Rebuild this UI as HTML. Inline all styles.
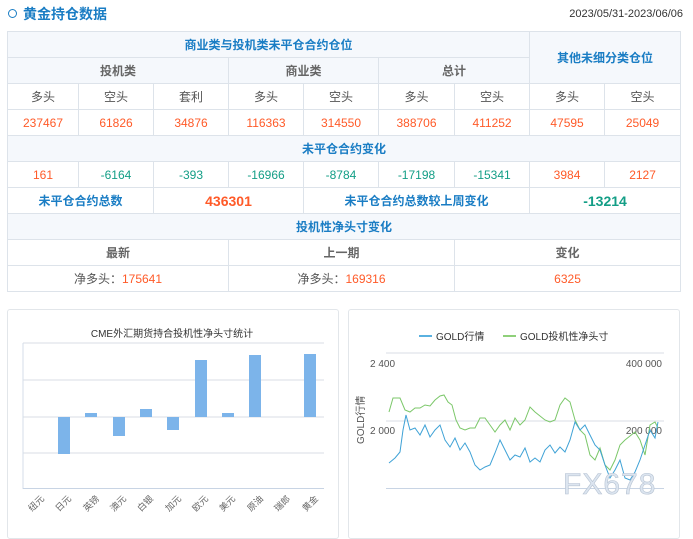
<!DOCTYPE html>
<html><head><meta charset="utf-8"><style>
*{margin:0;padding:0;box-sizing:border-box}
body{width:693px;height:520px;overflow:hidden;background:#fff;font-family:"Liberation Sans","Noto Sans CJK SC",sans-serif;position:relative}
.title{position:absolute;left:8px;top:6px;font-size:14px;font-weight:bold;color:#1a7dc4;line-height:16px}
.title i{display:inline-block;width:9px;height:9px;border:1.5px solid #1a7dc4;border-radius:50%;margin-right:6px;vertical-align:1px}
.date{position:absolute;right:10px;top:8px;font-size:11px;color:#333}
table{position:absolute;left:7px;top:31px;width:673px;border-collapse:collapse;table-layout:fixed}
td{height:26px;border:1px solid #dde3ea;text-align:center;font-size:12px;color:#555;padding:0}
.h{background:#f5f8fc}
.b{color:#1a7dc4;font-weight:bold}
.g{color:#666;font-weight:bold}
.o{color:#ff5a28}
.gr{color:#139e86}
.bo{font-weight:bold;font-size:14px}
.panel{position:absolute;top:309px;height:230px;border:1px solid #e2e6ea;border-radius:3px;background:#fff}
svg{position:absolute;left:0;top:0}
</style></head><body>
<div class="title"><i></i>黄金持仓数据</div>
<div class="date">2023/05/31-2023/06/06</div>
<table>
<colgroup><col style="width:71px"><col style="width:75px"><col style="width:75px"><col style="width:75px"><col style="width:75px"><col style="width:76px"><col style="width:75px"><col style="width:75px"><col style="width:76px"></colgroup>
<tr><td colspan="7" class="h b">商业类与投机类未平仓合约仓位</td><td colspan="2" rowspan="2" class="h b">其他未细分类仓位</td></tr>
<tr><td colspan="3" class="h g">投机类</td><td colspan="2" class="h g">商业类</td><td colspan="2" class="h g">总计</td></tr>
<tr><td>多头</td><td>空头</td><td>套利</td><td>多头</td><td>空头</td><td>多头</td><td>空头</td><td>多头</td><td>空头</td></tr>
<tr class="o"><td class="o">237467</td><td class="o">61826</td><td class="o">34876</td><td class="o">116363</td><td class="o">314550</td><td class="o">388706</td><td class="o">411252</td><td class="o">47595</td><td class="o">25049</td></tr>
<tr><td colspan="9" class="h b">未平仓合约变化</td></tr>
<tr><td class="o">161</td><td class="gr">-6164</td><td class="gr">-393</td><td class="gr">-16966</td><td class="gr">-8784</td><td class="gr">-17198</td><td class="gr">-15341</td><td class="o">3984</td><td class="o">2127</td></tr>
<tr><td colspan="2" class="b">未平仓合约总数</td><td colspan="2" class="o bo">436301</td><td colspan="3" class="b">未平仓合约总数较上周变化</td><td colspan="2" class="gr bo">-13214</td></tr>
<tr><td colspan="9" class="h b">投机性净头寸变化</td></tr>
<tr><td colspan="3" class="g">最新</td><td colspan="3" class="g">上一期</td><td colspan="3" class="g">变化</td></tr>
<tr><td colspan="3">净多头：<span class="o">175641</span></td><td colspan="3">净多头：<span class="o">169316</span></td><td colspan="3" class="o">6325</td></tr>
</table>
<div class="panel" style="left:7px;width:332px"></div>
<div class="panel" style="left:348px;width:332px"></div>
<svg width="693" height="520" font-family="Liberation Sans,Noto Sans CJK SC,sans-serif">
<text x="172" y="337" font-size="10" text-anchor="middle" fill="#333">CME外汇期货持合投机性净头寸统计</text>
<g stroke="#e6e9ee" stroke-width="1.5"><line x1="23" y1="343" x2="324" y2="343"/><line x1="23" y1="380" x2="324" y2="380"/><line x1="23" y1="417" x2="324" y2="417"/><line x1="23" y1="453" x2="324" y2="453"/></g>
<line x1="23" y1="343" x2="23" y2="489" stroke="#d5dde8"/><line x1="23" y1="488.5" x2="324" y2="488.5" stroke="#c8d4e4"/>
<g fill="#7cb4ea">
<rect x="58" y="417" width="12" height="37"/><rect x="85" y="413" width="12" height="4"/><rect x="113" y="417" width="12" height="19"/><rect x="140" y="409" width="12" height="8"/><rect x="167" y="417" width="12" height="13"/><rect x="195" y="360" width="12" height="57"/><rect x="222" y="413" width="12" height="4"/><rect x="249" y="355" width="12" height="62"/><rect x="304" y="354" width="12" height="63"/></g>
<g font-size="9" fill="#666">
<text transform="translate(32,512) rotate(-45)">纽元</text><text transform="translate(59,512) rotate(-45)">日元</text><text transform="translate(87,512) rotate(-45)">英镑</text><text transform="translate(114,512) rotate(-45)">澳元</text><text transform="translate(141,512) rotate(-45)">白银</text><text transform="translate(169,512) rotate(-45)">加元</text><text transform="translate(196,512) rotate(-45)">欧元</text><text transform="translate(223,512) rotate(-45)">美元</text><text transform="translate(251,512) rotate(-45)">原油</text><text transform="translate(278,512) rotate(-45)">瑞郎</text><text transform="translate(306,512) rotate(-45)">黄金</text></g>
<line x1="419" y1="336" x2="432" y2="336" stroke="#5ab1e0" stroke-width="2"/><text x="436" y="340" font-size="10" fill="#333">GOLD行情</text>
<line x1="503" y1="336" x2="516" y2="336" stroke="#8fd07a" stroke-width="2"/><text x="520" y="340" font-size="10" fill="#333">GOLD投机性净头寸</text>
<line x1="386" y1="353" x2="664" y2="353" stroke="#e6e9ee" stroke-width="1.5"/><line x1="386" y1="421" x2="664" y2="421" stroke="#e6e9ee" stroke-width="1.5"/>
<line x1="386" y1="488.5" x2="664" y2="488.5" stroke="#c8d4e4"/>
<g font-size="10" fill="#555"><text x="370" y="367">2 400</text><text x="370" y="434">2 000</text><text x="662" y="367" text-anchor="end">400 000</text><text x="662" y="434" text-anchor="end">200 000</text>
<text transform="translate(364,444) rotate(-90)">GOLD行情</text></g>
<polyline fill="none" stroke="#7bc769" stroke-width="1" points="389,412 393,398 400,398 405,410 410,412 415,408 420,408 425,405 430,406 435,400 440,396 444,395 448,402 452,405 456,420 460,428 465,430 470,428 475,428 480,418 485,418 490,425 495,432 500,425 505,420 510,430 515,418 520,425 525,420 530,407 535,412 540,416 545,420 550,422 555,420 560,405 565,398 570,402 575,420 580,430 585,435 590,455 595,460 600,448 605,465 610,470 615,460 620,445 625,440 630,436 635,432 640,440 645,455 650,425 655,422 658,428"/>
<polyline fill="none" stroke="#3fa2d6" stroke-width="1" points="389,463 395,458 400,452 403,430 406,415 410,430 415,428 420,435 425,425 430,437 435,430 440,425 445,440 450,447 455,438 460,450 465,443 470,452 475,465 480,470 485,467 490,465 495,453 500,440 505,450 510,460 515,455 520,457 525,448 530,462 535,458 540,462 545,450 550,445 555,453 560,447 565,452 570,440 575,422 580,430 585,425 590,435 595,445 600,450 605,465 610,478 615,470 620,460 625,478 630,480 635,472 640,460 645,445 650,430 655,438 658,422"/>
<text x="563" y="494" font-size="30" fill="#dce5f0" stroke="#b7c3d2" stroke-width="0.6" letter-spacing="1">FX678</text>
</svg>
</body></html>
